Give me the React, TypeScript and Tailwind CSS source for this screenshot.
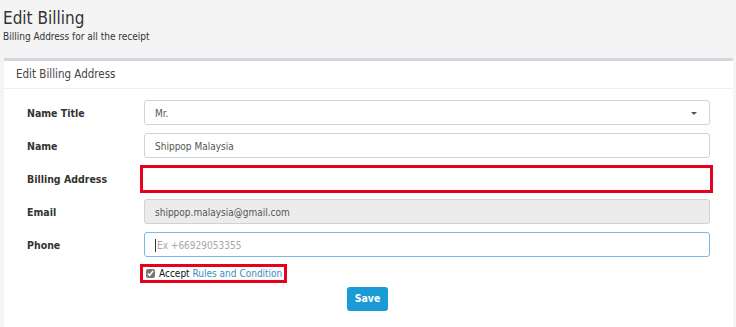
import React from 'react';

const font = "font-['Tahoma','DejaVu_Sans_Condensed','DejaVu_Sans',sans-serif]";

const Row: React.FC<{ label: string; children: React.ReactNode }> = ({ label, children }) => (
	<div className="flex items-center h-[25px]">
		<label className="w-[117px] shrink-0 pt-[2px] font-bold text-[10.5px] text-[#333]">{label}</label>
		<div className="flex-1">{children}</div>
	</div>
);

const inputBase =
	'block w-full h-[25px] rounded-[3px] border px-[10px] pt-px text-[10px] text-[#555] outline-none';

export default function App() {
	return (
		<div className={`${font} bg-[#f4f4f4] w-[736px] h-[327px] overflow-hidden`}>
			<div className="pl-[3px] pt-[7px] h-[58px]">
				<h1 className="text-[17px] leading-[22px] text-[#333]">Edit Billing</h1>
				<p className="mt-[2px] text-[10px] leading-[12px] text-[#333]">Billing Address for all the receipt</p>
			</div>

			<div className="ml-[4px] mr-[3px] bg-white border-t-[3px] border-[#d2d6de] h-[300px]">
				<div className="h-[28px] border-b border-[#f0f0f0] pl-[12px] flex items-center text-[11.5px] text-[#444]">
					Edit Billing Address
				</div>

				<div className="pl-[23px] pr-[23px] pt-[11px] flex flex-col gap-[8px]">
					<Row label="Name Title">
						<div className={`${inputBase} border-[#d2d2d2] flex items-center justify-between`}>
							<span>Mr.</span>
							<svg width="6" height="3" viewBox="0 0 6 3" className="mr-[2px]">
								<path d="M0 0h6L3 3z" fill="#555" />
							</svg>
						</div>
					</Row>
					<Row label="Name">
						<input className={`${inputBase} border-[#d2d2d2]`} defaultValue="Shippop Malaysia" />
					</Row>
					<Row label="Billing Address">
						<div className="-ml-[4px] -mr-[3px] border-[3px] border-[#e8001c] h-[28px]">
							<input className="block w-full h-full px-[8px] text-[10px] outline-none" />
						</div>
					</Row>
					<Row label="Email">
						<input
							className={`${inputBase} border-[#d2d2d2] bg-[#ececec]`}
							defaultValue="shippop.malaysia@gmail.com"
							readOnly
						/>
					</Row>
					<Row label="Phone">
						<div className={`${inputBase} border-[#7ab8ea] flex items-center`}>
							<span className="w-px h-[13px] bg-[#333] mr-px" />
							<span className="text-[#a8a8a8]">Ex +66929053355</span>
						</div>
					</Row>

					<div className="pl-[113px] -mt-[4px]">
						<div className="inline-flex items-center gap-[4px] border-[3px] border-[#e8001c] h-[19px] pl-[3px] pr-[2px] text-[10px]">
							<input type="checkbox" defaultChecked className="w-[9px] h-[9px] m-0 accent-[#777]" />
							<span className="text-[#111]">
								Accept <span className="text-[#3c8dbc]">Rules and Condition</span>
							</span>
						</div>
					</div>

					<div className="flex justify-center pr-[2px] -mt-[6px]">
						<button className="w-[41px] h-[24px] rounded-[3px] bg-[#1a9bd3] text-white text-[10.5px] font-bold">
							Save
						</button>
					</div>
				</div>
			</div>
		</div>
	);
}
